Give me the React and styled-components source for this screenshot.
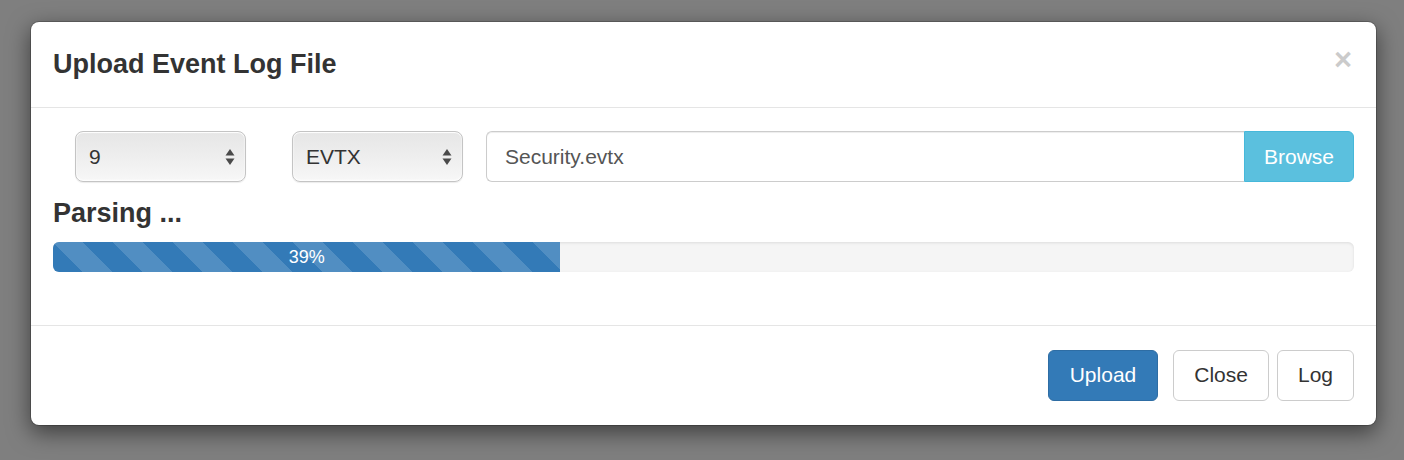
import React from "react";
import styled, { createGlobalStyle } from "styled-components";

const Global = createGlobalStyle`
  html, body { margin: 0; padding: 0; }
  body {
    background: #7f7f7f;
    font-family: "Liberation Sans", Arial, Helvetica, sans-serif;
    color: #333;
    width: 1404px;
    height: 460px;
    overflow: hidden;
  }
`;

const Backdrop = styled.div`
  padding: 21px 27px 0 30px;
`;

const Modal = styled.div`
  width: 1347px;
  box-sizing: border-box;
  background: #fff;
  border: 1px solid rgba(0, 0, 0, 0.2);
  border-radius: 9px;
  box-shadow: 0 7px 22px rgba(0, 0, 0, 0.5);
  background-clip: padding-box;
`;

const Header = styled.div`
  display: flex;
  align-items: center;
  justify-content: space-between;
  padding: 23px 22px 23px 22px;
  border-bottom: 1px solid #e5e5e5;
  height: 39px;
`;

const Title = styled.h4`
  margin: 0;
  font-size: 27px;
  font-weight: 700;
  line-height: 39px;
  color: #333;
`;

const CloseX = styled.span`
  font-size: 31px;
  font-weight: 700;
  line-height: 1;
  color: #000;
  opacity: 0.2;
  margin-top: -10px;
  margin-right: 2px;
`;

const Body = styled.div`
  padding: 23px 22px 22px 22px;
`;

const Row = styled.div`
  display: flex;
  align-items: center;
  padding-left: 22px;
`;

const Select = styled.div`
  box-sizing: border-box;
  width: 171px;
  height: 51px;
  margin-right: ${(p) => p.$gap || 0}px;
  display: flex;
  align-items: center;
  justify-content: space-between;
  padding: 0 10px 0 13px;
  font-size: 21px;
  color: #333;
  border: 1px solid #c4c4c4;
  border-radius: 8px;
  background: linear-gradient(to bottom, #e6e6e6 0%, #ededed 45%, #f7f7f7 100%);
  box-shadow: inset 0 1px 1px #fff, inset 0 -1px 2px #fff, 0 1px 1px rgba(0,0,0,0.08);
`;

const InputGroup = styled.div`
  flex: 1;
  display: flex;
  height: 51px;
`;

const FileInput = styled.div`
  flex: 1;
  box-sizing: border-box;
  border: 1px solid #ccc;
  border-right: none;
  border-radius: 6px 0 0 6px;
  box-shadow: inset 0 1px 1px rgba(0, 0, 0, 0.075);
  padding: 0 18px;
  display: flex;
  align-items: center;
  font-size: 21px;
  color: #555;
`;

const Btn = styled.button`
  box-sizing: border-box;
  height: 51px;
  padding: 0 ${(p) => p.$px || 20}px;
  font-family: "Liberation Sans", Arial, sans-serif;
  font-size: 21px;
  border-radius: ${(p) => p.$radius || "6px"};
  border: 1px solid ${(p) => p.$border};
  background: ${(p) => p.$bg};
  color: ${(p) => p.$color};
  margin-left: ${(p) => p.$ml || 0}px;
  cursor: pointer;
`;

const Heading = styled.h4`
  margin: 17px 0 13px;
  font-size: 27px;
  font-weight: 700;
  line-height: 1.1;
  color: #333;
`;

const Progress = styled.div`
  height: 30px;
  border-radius: 6px;
  background: #f5f5f5;
  box-shadow: inset 0 1px 3px rgba(0, 0, 0, 0.1);
  overflow: hidden;
  margin-bottom: 31px;
  display: flex;
`;

const Bar = styled.div`
  height: 100%;
  background-color: #337ab7;
  background-image: linear-gradient(
    45deg,
    rgba(255, 255, 255, 0.15) 25%,
    transparent 25%,
    transparent 50%,
    rgba(255, 255, 255, 0.15) 50%,
    rgba(255, 255, 255, 0.15) 75%,
    transparent 75%,
    transparent
  );
  background-size: 60px 60px;
  color: #fff;
  font-size: 18px;
  line-height: 30px;
  text-align: center;
`;

const Footer = styled.div`
  border-top: 1px solid #e5e5e5;
  padding: 24px 22px 24px;
  display: flex;
  justify-content: flex-end;
`;

const Arrows = () => (
  <svg width="10" height="18" viewBox="0 0 10 18">
    <path d="M5 1 L9.5 7.5 L0.5 7.5 Z" fill="#4a4a4a" />
    <path d="M5 17 L9.5 10.5 L0.5 10.5 Z" fill="#4a4a4a" />
  </svg>
);

export default function App() {
  const pct = 39;
  return (
    <>
      <Global />
      <Backdrop>
        <Modal>
          <Header>
            <Title>Upload Event Log File</Title>
            <CloseX>×</CloseX>
          </Header>
          <Body>
            <Row>
              <Select $gap={46}>
                <span>9</span>
                <Arrows />
              </Select>
              <Select $gap={23}>
                <span>EVTX</span>
                <Arrows />
              </Select>
              <InputGroup>
                <FileInput>Security.evtx</FileInput>
                <Btn
                  $bg="#5bc0de"
                  $border="#46b8da"
                  $color="#fff"
                  $radius="0 6px 6px 0"
                  $px={19}
                >
                  Browse
                </Btn>
              </InputGroup>
            </Row>
            <Heading>Parsing ...</Heading>
            <Progress>
              <Bar style={{ width: `${pct}%` }}>{pct}%</Bar>
            </Progress>
          </Body>
          <Footer>
            <Btn $bg="#337ab7" $border="#2e6da4" $color="#fff" $px={21}>
              Upload
            </Btn>
            <Btn $bg="#fff" $border="#ccc" $color="#333" $ml={15} $px={20}>
              Close
            </Btn>
            <Btn $bg="#fff" $border="#ccc" $color="#333" $ml={8} $px={20}>
              Log
            </Btn>
          </Footer>
        </Modal>
      </Backdrop>
    </>
  );
}
